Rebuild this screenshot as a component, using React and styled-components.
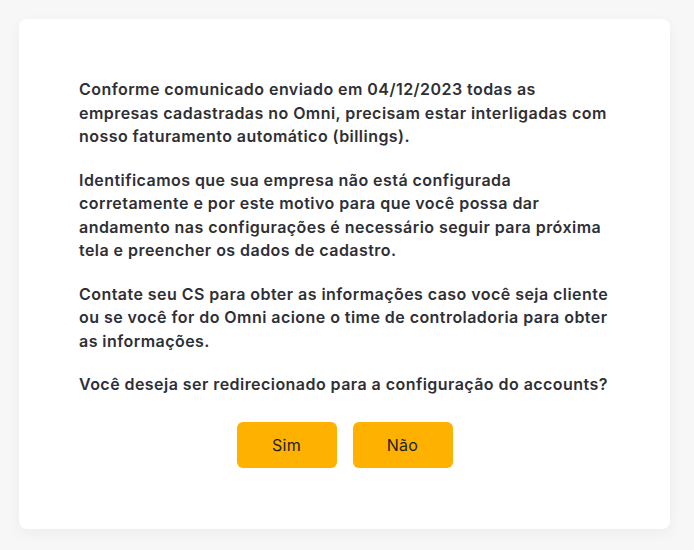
import React from "react";
import styled, { createGlobalStyle } from "styled-components";

const Global = createGlobalStyle`
  body {
    margin: 0;
    background: #f7f7f7;
    font-family: "Inter", "Noto Sans", sans-serif;
  }
`;

const Page = styled.div`
  box-sizing: border-box;
  min-height: 550px;
  padding: 19px 24px 21px 19px;
`;

const Card = styled.div`
  box-sizing: border-box;
  width: 651px;
  height: 510px;
  background: #ffffff;
  border-radius: 8px;
  box-shadow: 0 4px 14px rgba(40, 40, 80, 0.05);
  padding: 59px 60px 60px 60px;
  display: flex;
  flex-direction: column;
`;

const Text = styled.p`
  margin: 0 0 20px 0;
  font-size: 16px;
  font-weight: 600;
  line-height: 23.5px;
  letter-spacing: 0.45px;
  color: #2f2f36;
`;

const Actions = styled.div`
  display: flex;
  justify-content: center;
  gap: 16px;
  margin-top: 5px;
`;

const Botao = styled.button`
  width: 100px;
  height: 46px;
  border: none;
  border-radius: 6px;
  background: #ffb100;
  color: #222;
  font-family: "Inter", "Noto Sans", sans-serif;
  font-size: 16px;
  letter-spacing: 0.3px;
  cursor: pointer;
`;

export default function App() {
  return (
    <Page>
      <Global />
      <Card>
        <Text>
          Conforme comunicado enviado em 04/12/2023 todas as empresas cadastradas no Omni, precisam estar interligadas com nosso faturamento automático (billings).
        </Text>
        <Text>
          Identificamos que sua empresa não está configurada corretamente e por este motivo para que você possa dar andamento nas configurações é necessário seguir para próxima tela e preencher os dados de cadastro.
        </Text>
        <Text>
          Contate seu CS para obter as informações caso você seja cliente ou se você for do Omni acione o time de controladoria para obter as informações.
        </Text>
        <Text>
          Você deseja ser redirecionado para a configuração do accounts?
        </Text>
        <Actions>
          <Botao>Sim</Botao>
          <Botao>Não</Botao>
        </Actions>
      </Card>
    </Page>
  );
}
